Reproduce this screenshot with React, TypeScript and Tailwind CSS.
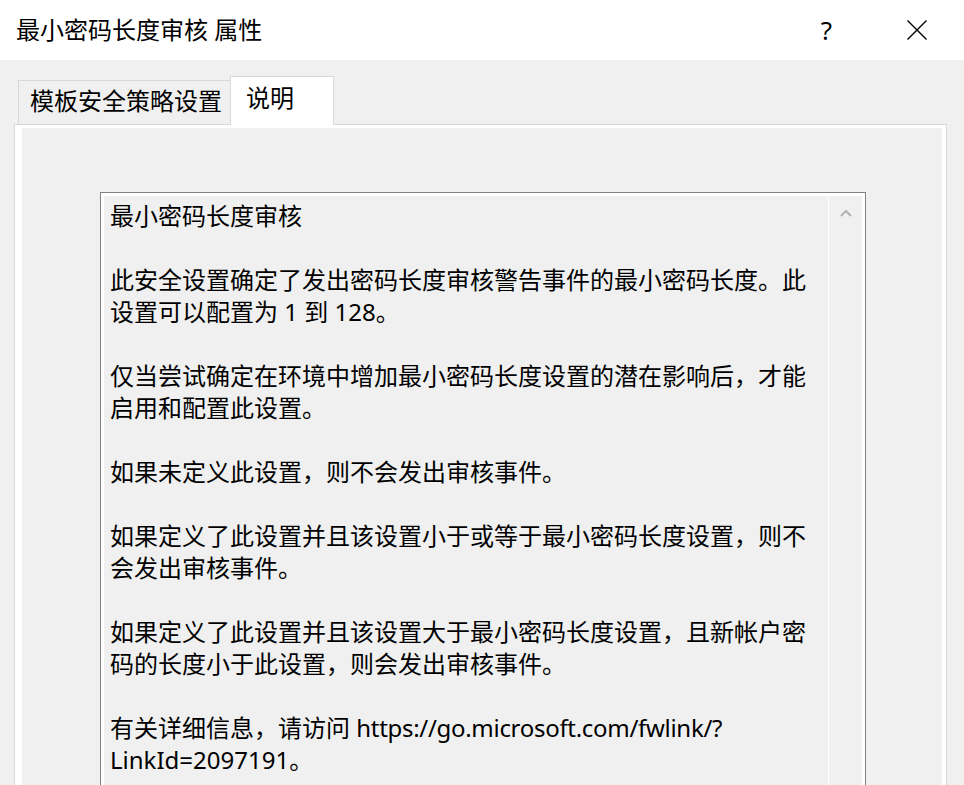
import React from 'react';

const lines: React.ReactNode[] = [
  '最小密码长度审核',
  '',
  '此安全设置确定了发出密码长度审核警告事件的最小密码长度。此',
  '设置可以配置为 1 到 128。',
  '',
  '仅当尝试确定在环境中增加最小密码长度设置的潜在影响后，才能',
  '启用和配置此设置。',
  '',
  '如果未定义此设置，则不会发出审核事件。',
  '',
  '如果定义了此设置并且该设置小于或等于最小密码长度设置，则不',
  '会发出审核事件。',
  '',
  '如果定义了此设置并且该设置大于最小密码长度设置，且新帐户密',
  '码的长度小于此设置，则会发出审核事件。',
  '',
  <>
    有关详细信息，请访问 <span className="tracking-[-0.3px]">https://go.microsoft.com/fwlink/?</span>
  </>,
  'LinkId=2097191。',
];

const App: React.FC = () => {
  return (
    <div className="w-[964px] h-[785px] overflow-hidden bg-[#f0f0f0] text-black font-['Noto_Sans','Noto_Sans_CJK_SC',sans-serif]">
      {/* title bar */}
      <div className="h-[60px] bg-white flex items-center pl-[16px]">
        <span className="text-[24px] leading-none">最小密码长度审核 属性</span>
        <span className="ml-auto text-[26px] leading-none">?</span>
        <svg className="ml-[75px] mr-[37px]" width="20" height="20" viewBox="0 0 20 20">
          <path d="M0.5 0.5 L19.5 19.5 M19.5 0.5 L0.5 19.5" stroke="#000" strokeWidth="1.4" fill="none" />
        </svg>
      </div>

      {/* tabs */}
      <div className="h-[64px] flex items-end pl-[18px]">
        <div className="h-[44px] w-[212px] border-l border-t border-[#d9d9d9] pl-[11px] pt-[4px] text-[24px] leading-[32px] whitespace-nowrap">
          模板安全策略设置
        </div>
        <div className="relative z-10 -mb-px h-[49px] w-[104px] border-l border-t border-r border-[#d9d9d9] bg-white pl-[15px] pt-[5px] text-[24px] leading-[32px]">
          说明
        </div>
      </div>

      {/* tab page */}
      <div className="ml-[14px] w-[933px] h-[700px] border border-[#d9d9d9] bg-white pl-[7px] pr-[4px] pt-[3px] flex">
        <div className="flex-1 bg-[#f0f0f0] pl-[78px] pt-[64px]">
          <div className="w-[766px] h-[640px] border border-[#828282] bg-white p-[3px] flex">
            <div className="flex-1 bg-[#f0f0f0] pl-[6px] pt-[4px] text-[24px] leading-[32px]">
              {lines.map((l, i) => (
                <div key={i} className="h-[32px] whitespace-pre">
                  {l}
                </div>
              ))}
            </div>
            <div className="w-[34px] border-l border-white bg-[#f0f0f0] flex justify-center pt-[13px]">
              <div>
                <svg width="12" height="8" viewBox="0 0 12 8">
                  <polyline points="1,7 6,2 11,7" stroke="#b4b4b4" strokeWidth="2.2" fill="none" />
                </svg>
              </div>
            </div>
          </div>
        </div>
      </div>
    </div>
  );
};

export default App;
